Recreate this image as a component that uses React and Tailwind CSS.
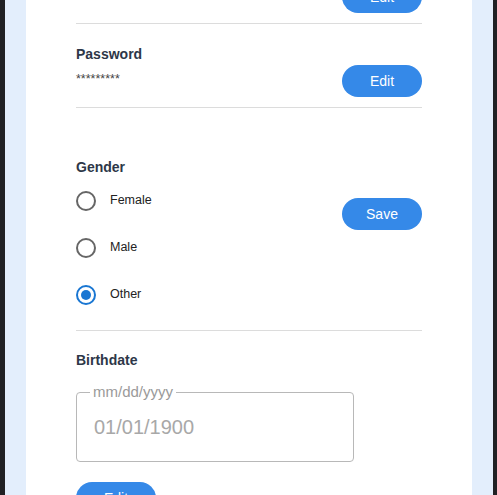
import React from "react";

const font = { fontFamily: '"Liberation Sans", Arial, sans-serif' };

function Btn({ children, className = "" }) {
  return (
    <button
      className={
        "h-8 w-20 rounded-full bg-[#3589e8] text-[14px] text-white shrink-0 " +
        className
      }
    >
      {children}
    </button>
  );
}

function Field({ title, value }) {
  return (
    <div className="border-b border-[#dcdcdc] pt-5 pb-[10px]">
      <div className="text-[14px] leading-5 font-bold text-[#2d3748]">{title}</div>
      <div className="mt-[1px] flex items-start justify-between">
        <div className="mt-[2px] text-[12.5px] leading-6 text-[#444]">{value}</div>
        <Btn>Edit</Btn>
      </div>
    </div>
  );
}

function Radio({ label, checked }) {
  return (
    <div className="flex h-[47px] items-center">
      <span
        className={
          "flex h-5 w-5 items-center justify-center rounded-full border-2 " +
          (checked ? "border-[#1976d2]" : "border-[#666]")
        }
      >
        {checked && <span className="h-[10px] w-[10px] rounded-full bg-[#1976d2]" />}
      </span>
      <span className="ml-[14px] text-[12.5px] text-[#222]">{label}</span>
    </div>
  );
}

export default function App() {
  return (
    <div style={font} className="h-[495px] overflow-hidden bg-[#202124] pl-[5px] pr-[4px]">
      <div className="h-full bg-[#e3eefc] px-[21px]">
        <div className="h-full overflow-hidden bg-white px-[50px]">
          <div className="-mt-[60px]">
            <Field title="Username" value="User" />
            <Field title="Password" value="*********" />
            <div className="flex justify-between border-b border-[#dcdcdc] pt-[49px] pb-[12px]">
              <div>
                <div className="text-[14px] leading-5 font-bold text-[#2d3748]">Gender</div>
                <Radio label="Female" />
                <Radio label="Male" />
                <Radio label="Other" checked />
              </div>
              <Btn className="mt-[41px]">Save</Btn>
            </div>
            <div className="pt-[19px]">
              <div className="text-[14px] leading-5 font-bold text-[#2d3748]">Birthdate</div>
              <div className="relative mt-[22px] flex h-[70px] w-[278px] items-center rounded border border-[#b8b8b8] pl-[17px]">
                <span className="absolute -top-[9px] left-[13px] bg-white px-[3px] text-[15px] leading-4 text-[#9a9a9a]">
                  mm/dd/yyyy
                </span>
                <span className="text-[20px] text-[#a8a8a8]">01/01/1900</span>
              </div>
              <Btn className="mt-5">Edit</Btn>
            </div>
          </div>
        </div>
      </div>
    </div>
  );
}
